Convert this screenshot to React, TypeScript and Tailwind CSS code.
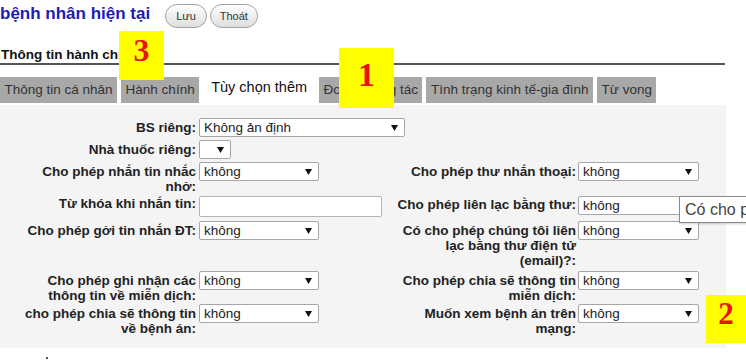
import React from "react";

function Arrow() {
  return (
    <svg width="7" height="6" viewBox="0 0 7 6" className="shrink-0">
      <polygon points="0,0 7,0 3.5,6" fill="#111" />
    </svg>
  );
}

function Sel({ w, text }: { w: string; text?: string }) {
  return (
    <div
      className={
        "h-[19px] border border-[#a6a6a6] rounded-[2px] bg-white flex items-center justify-between pl-[4px] pr-[6px] text-[13.5px] font-normal text-[#222] leading-none " +
        w
      }
    >
      <span>{text ?? ""}</span>
      <Arrow />
    </div>
  );
}

function Label({ lines, right }: { lines: string[]; right?: boolean }) {
  return (
    <div
      className={
        "shrink-0 text-right font-bold text-[13.5px] text-[#222] leading-[15px] pt-[2px] whitespace-nowrap " +
        (right ? "ml-[3px] w-[191px]" : "w-[196px]")
      }
    >
      {lines.map((l, i) => (
        <div key={i}>{l}</div>
      ))}
    </div>
  );
}

export default function App() {
  const tabs = [
    { t: "Thông tin cá nhân" },
    { t: "Hành chính" },
    { t: "Tùy chọn thêm", active: true },
    { t: "Đơn vị cộng tác" },
    { t: "Tình trạng kinh tế-gia đình" },
    { t: "Từ vong" },
  ];
  return (
    <div className="relative w-[746px] h-[361px] overflow-hidden bg-white font-['Liberation_Sans',Arial,sans-serif]">
      {/* header */}
      <div className="flex items-start h-[28px]">
        <h1 className="pt-[4px] text-[17px] leading-[20px] font-bold text-[#1c1cb4]">
          bệnh nhân hiện tại
        </h1>
        <div className="flex gap-[3px] ml-[15px] mt-[4px]">
          <button className="h-[24px] px-[10px] rounded-full border border-[#a3a3a3] bg-gradient-to-b from-white to-[#dedede] text-[11px] text-[#333]">
            Lưu
          </button>
          <button className="h-[24px] px-[9px] rounded-full border border-[#a3a3a3] bg-gradient-to-b from-white to-[#dedede] text-[11px] text-[#333]">
            Thoát
          </button>
        </div>
      </div>

      {/* section heading */}
      <div className="mt-[19px] w-[725px] border-b-2 border-[#555]">
        <div className="pl-[1px] text-[13.5px] leading-[16px] font-bold text-[#111]">
          Thông tin hành chính
        </div>
      </div>

      {/* tabs */}
      <div className="mt-[12px] flex gap-[4px] h-[26px]">
        {tabs.map((tab) =>
          tab.active ? (
            <div
              key={tab.t}
              className="h-[26px] px-[8px] bg-white text-[14.5px] leading-[21px] text-[#111] whitespace-nowrap"
            >
              {tab.t}
            </div>
          ) : (
            <div
              key={tab.t}
              className="h-[26px] px-[4.5px] bg-[#a8a8a8] text-[13.5px] leading-[26px] text-[#333] whitespace-nowrap"
            >
              {tab.t}
            </div>
          )
        )}
      </div>

      {/* panel */}
      <div className="mt-[2px] w-[726px] bg-[#f4f4f4] pt-[13px] pb-[12px] flex flex-col">
        <div className="flex items-start">
          <Label lines={["BS riêng:"]} />
          <div className="ml-[3px]">
            <Sel w="w-[206px]" text="Không ản định" />
          </div>
        </div>
        <div className="flex items-start mt-[3px]">
          <Label lines={["Nhà thuốc riêng:"]} />
          <div className="ml-[3px]">
            <Sel w="w-[32px]" />
          </div>
        </div>
        <div className="flex items-start mt-[3px]">
          <Label lines={["Cho phép nhắn tin nhắc", "nhở:"]} />
          <div className="ml-[3px] w-[183px] shrink-0">
            <Sel w="w-[120px]" text="không" />
          </div>
          <Label right lines={["Cho phép thư nhắn thoại:"]} />
          <div className="ml-[2px]">
            <Sel w="w-[121px]" text="không" />
          </div>
        </div>
        <div className="flex items-start mt-[2px]">
          <div className="shrink-0 w-[196px] text-right font-bold text-[13.5px] text-[#222] leading-[15px] whitespace-nowrap">
            Từ khóa khi nhắn tin:
          </div>
          <div className="ml-[3px] w-[183px] shrink-0">
            <div className="h-[21px] w-[183px] border border-[#b5b5b5] rounded-[2px] bg-white" />
          </div>
          <div className="shrink-0 ml-[3px] w-[191px] text-right font-bold text-[13.5px] text-[#222] leading-[15px] pt-[1px] whitespace-nowrap">
            Cho phép liên lạc bằng thư:
          </div>
          <div className="ml-[2px]">
            <Sel w="w-[121px]" text="không" />
          </div>
        </div>
        <div className="flex items-start mt-[4px]">
          <Label lines={["Cho phép gởi tin nhắn ĐT:"]} />
          <div className="ml-[3px] w-[183px] shrink-0">
            <Sel w="w-[120px]" text="không" />
          </div>
          <Label
            right
            lines={["Có cho phép chúng tôi liên", "lạc bằng thư điện tử", "(email)?:"]}
          />
          <div className="ml-[2px]">
            <Sel w="w-[121px]" text="không" />
          </div>
        </div>
        <div className="flex items-start mt-[3px]">
          <Label lines={["Cho phép ghi nhận các", "thông tin về miễn dịch:"]} />
          <div className="ml-[3px] w-[183px] shrink-0">
            <Sel w="w-[120px]" text="không" />
          </div>
          <Label right lines={["Cho phép chia sẽ thông tin", "miễn dịch:"]} />
          <div className="ml-[2px]">
            <Sel w="w-[121px]" text="không" />
          </div>
        </div>
        <div className="flex items-start mt-[1px]">
          <Label lines={["cho phép chia sẽ thông tin", "về bệnh án:"]} />
          <div className="ml-[3px] w-[183px] shrink-0">
            <Sel w="w-[120px]" text="không" />
          </div>
          <Label right lines={["Muốn xem bệnh án trên", "mạng:"]} />
          <div className="ml-[2px]">
            <Sel w="w-[121px]" text="không" />
          </div>
        </div>
      </div>

      <div className="mt-[9px] ml-[46px] w-[2px] h-[2px] bg-[#555]" />

      {/* tooltip */}
      <div className="absolute left-[679px] top-[196px] w-[80px] h-[27px] bg-white border border-[#8a8a8a] shadow-[1px_1px_2px_rgba(0,0,0,0.2)] pl-[5px] text-[16px] leading-[25px] text-[#444] whitespace-nowrap">
        Có cho phép
      </div>

      {/* annotation boxes */}
      <div className="absolute left-[119px] top-[31px] w-[45px] h-[49px] bg-[#ffff00] flex justify-center pt-[3px] font-['Liberation_Serif',serif] font-bold text-[32px] leading-[32px] text-[#ee1111]">
        3
      </div>
      <div className="absolute left-[339px] top-[48px] w-[55px] h-[60px] bg-[#ffff00] flex justify-center pt-[10px] font-['Liberation_Serif',serif] font-bold text-[34px] leading-[34px] text-[#ee1111]">
        1
      </div>
      <div className="absolute left-[706px] top-[295px] w-[44px] h-[48px] bg-[#ffff00] flex justify-center pt-[3px] font-['Liberation_Serif',serif] font-bold text-[31px] leading-[31px] text-[#ee1111]">
        <span className="ml-[-4px]">2</span>
      </div>
    </div>
  );
}
